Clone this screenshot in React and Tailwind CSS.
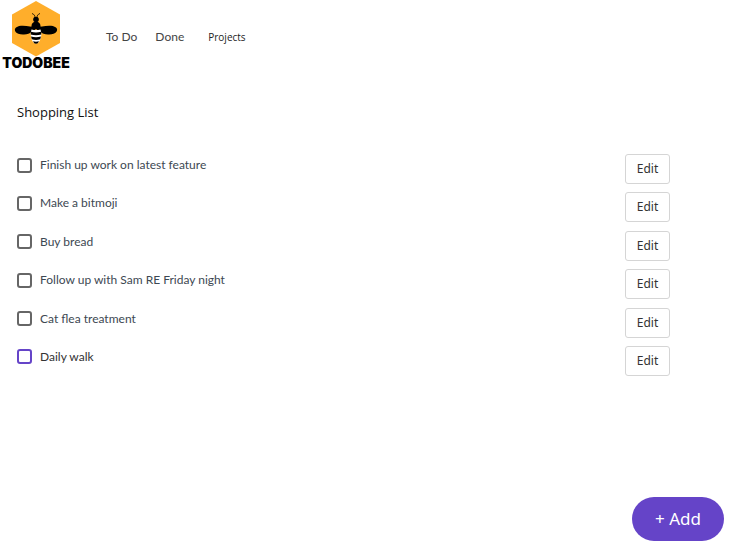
const tasks = [
  'Finish up work on latest feature',
  'Make a bitmoji',
  'Buy bread',
  'Follow up with Sam RE Friday night',
  'Cat flea treatment',
  'Daily walk',
];

function Logo() {
  return (
    <a href="#" className="flex w-[72px] flex-col items-center text-black">
      <svg viewBox="0 0 50 57" className="h-[57px] w-[50px]" aria-hidden="true">
        <path d="M25 1 49 14.500V43L25 56.500 1 43V14.500Z" fill="#ffae2b" />
        <g fill="#000">
          <path d="M25 27.500C20 27 10 24 5 27.500c-3 2.500 0 7.500 8 7 7-.5 9-3.500 12-5.500 3 2 5 5 12 5.500 8 .5 11-4.500 8-7C40 24 30 27 25 27.500Z" />
          <circle cx="25" cy="19.500" r="2.800" />
          <path d="M20.500 26c0-6 9-6 9 0l.5 3h-10Z" />
        </g>
        <path d="M20.500 29.500q4.500 1 9 0l1 4.500q-1 9.500-5.500 9.500t-5.500-9.500Z" fill="#fff" />
        <path d="M20 31.800q5 1.200 10 0l.4 2.700q-5.400 1.500-10.800 0ZM20 36.600q5 1.300 10 0l-.8 2.700q-4.200 1.300-8.400 0ZM22 41.300q3 .8 6 0-1 2.500-3 2.500t-3-2.500Z" fill="#000" />
        <path d="M24 18c0-2.500-.8-3.700-3-4.500M26 18c0-2.500.8-3.700 3-4.500" fill="none" stroke="#000" strokeWidth=".8" />
      </svg>
      <span className="font-['Inter',sans-serif] text-[14px] leading-3 font-black">TODOBEE</span>
    </a>
  );
}

function Task({ name, last }) {
  return (
    <li className="flex h-[30px] items-start justify-between">
      <label
        className={`flex items-center gap-2 pt-[3px] font-['Lato',sans-serif] text-[12px] leading-4 ${last ? 'text-[#333333]' : 'text-[#3d4852]'}`}
      >
        <input
          type="checkbox"
          className={`size-[15px] appearance-none rounded-[3px] border-2 bg-white ${last ? 'border-[#6544c8]' : 'border-[#666666]'}`}
        />
        {name}
      </label>
      <button
        type="button"
        aria-label={`Edit ${name}`}
        className="h-[30px] w-[45px] rounded-[3px] border border-[#d5d5d5] bg-white font-['Noto_Sans',sans-serif] text-[12px] text-[#333333]"
      >
        Edit
      </button>
    </li>
  );
}

export default function App() {
  return (
    <div className="flex min-h-screen flex-col bg-white">
      <header className="flex h-[70px] items-start">
        <Logo />
        <nav className="flex items-center pt-[28px] pl-[34px] font-['Lato',sans-serif] text-[12px] leading-[18px] text-[#444444]">
          <a href="#todo">To Do</a>
          <a href="#done" className="ml-[18px]">Done</a>
          <a href="#projects" className="ml-6 font-['Open_Sans',sans-serif] text-[10px] text-[#222222]">
            Projects
          </a>
        </nav>
      </header>
      <main className="flex-1 pr-[74px] pl-[17px]">
        <h1 className="pt-8 font-['Open_Sans',sans-serif] text-[13px] leading-5 text-[#111111]">Shopping List</h1>
        <ul className="mt-8 flex h-[222px] flex-col justify-between">
          {tasks.map((name, i) => (
            <Task key={name} name={name} last={i === tasks.length - 1} />
          ))}
        </ul>
      </main>
      <footer className="flex justify-end pr-5 pb-[19px]">
        <button
          type="button"
          className="h-11 w-[92px] rounded-full bg-[#6544c8] font-['Noto_Sans',sans-serif] text-[17px] text-white"
        >
          + Add
        </button>
      </footer>
    </div>
  );
}
